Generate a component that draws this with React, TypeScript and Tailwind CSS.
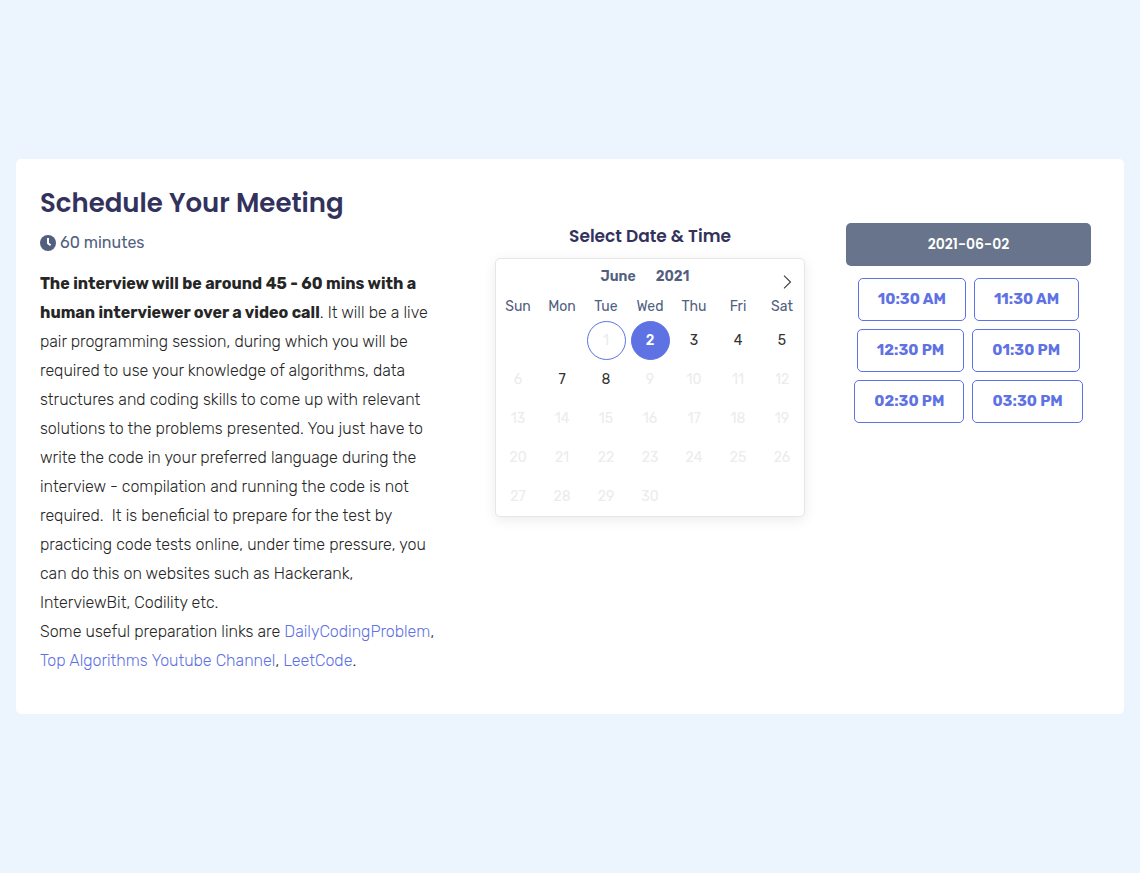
import { useState } from "react";

const weekdays = ["Sun", "Mon", "Tue", "Wed", "Thu", "Fri", "Sat"];
const weeks: number[][] = [
  [0, 0, 1, 2, 3, 4, 5],
  [6, 7, 8, 9, 10, 11, 12],
  [13, 14, 15, 16, 17, 18, 19],
  [20, 21, 22, 23, 24, 25, 26],
  [27, 28, 29, 30, 0, 0, 0],
];
const available = [2, 3, 4, 5, 7, 8];
const today = 1;
const slots = [
  ["10:30 AM", "11:30 AM"],
  ["12:30 PM", "01:30 PM"],
  ["02:30 PM", "03:30 PM"],
];

function dayStyle(day: number, selected: number) {
  if (day === selected) return "border-[#5e72e4] bg-[#5e72e4] font-medium text-white";
  if (day === today) return "border-[#5e72e4] text-[#ececec]";
  if (available.includes(day)) return "border-transparent text-[#333333]";
  return "border-transparent text-[#ececec]";
}

function Calendar({ selected, onSelect }: { selected: number; onSelect: (day: number) => void }) {
  return (
    <div className="w-[310px] rounded-[5px] border border-[#e6e6e6] bg-white shadow-[0_3px_13px_rgba(0,0,0,0.08)]">
      <div className="grid h-[33px] grid-cols-[44px_1fr_44px]">
        <span />
        <h3 className="flex items-center justify-center gap-5 pt-[2px] pr-[10px] text-[14px] leading-5 font-semibold text-[#525f7f]">
          <span>June</span>
          <span>2021</span>
        </h3>
        <button type="button" aria-label="Next month" className="flex items-end justify-center pb-[3px] pl-[9px]">
          <svg width="14" height="14" viewBox="0 0 14 14" fill="none" stroke="#3c3c3c" strokeWidth="1.1">
            <path d="M4 .7 10.5 7 4 13.3" />
          </svg>
        </button>
      </div>
      <table className="w-full table-fixed border-collapse text-center text-[14px]">
        <thead>
          <tr className="h-[29px]">
            {weekdays.map((name) => (
              <th key={name} scope="col" className="p-0 font-normal text-[#525f7f]">{name}</th>
            ))}
          </tr>
        </thead>
        <tbody>
          {weeks.map((week, row) => (
            <tr key={row}>
              {week.map((day, col) => (
                <td key={col} className="h-[39px] p-0">
                  {day > 0 && (
                    <button
                      type="button"
                      disabled={!available.includes(day)}
                      onClick={() => onSelect(day)}
                      className={`mx-auto flex size-[39px] items-center justify-center rounded-full border ${dayStyle(day, selected)}`}
                    >
                      {day}
                    </button>
                  )}
                </td>
              ))}
            </tr>
          ))}
        </tbody>
      </table>
    </div>
  );
}

export default function App() {
  const [selected, setSelected] = useState(2);

  return (
    <main className="flex min-h-screen items-center bg-[#ecf4fe] px-4 font-['Rubik','Roboto',sans-serif]">
      <div className="grid w-full grid-cols-[462fr_344fr_302fr] rounded-[5px] bg-white pt-6 pb-[39px]">
        <section className="pr-8 pl-6">
          <h1 className="font-['Poppins','Inter',sans-serif] text-[26px] leading-10 font-semibold text-[#32325d]">
            Schedule Your Meeting
          </h1>
          <p className="mt-2 flex items-center gap-1 text-[16px] leading-6 text-[#525f7f]">
            <svg width="16" height="16" viewBox="0 0 16 16" aria-hidden="true">
              <circle cx="8" cy="8" r="8" fill="#525f7f" />
              <path d="M8 3V8.3L10.6 10.2" fill="none" stroke="#fff" strokeWidth="2" />
            </svg>
            60 minutes
          </p>
          <p className="mt-[14px] text-[16px] leading-[29px] font-light whitespace-nowrap text-[#262626]">
            <strong className="font-bold">
              The interview will be around 45 - 60 mins with a<br />
              human interviewer over a video call
            </strong>
            . It will be a live<br />
            pair programming session, during which you will be<br />
            required to use your knowledge of algorithms, data<br />
            structures and coding skills to come up with relevant<br />
            solutions to the problems presented. You just have to<br />
            write the code in your preferred language during the<br />
            interview - compilation and running the code is not<br />
            required.&nbsp; It is beneficial to prepare for the test by<br />
            practicing code tests online, under time pressure, you<br />
            can do this on websites such as Hackerank,<br />
            InterviewBit, Codility etc.<br />
            Some useful preparation links are <a href="#daily" className="text-[#5e72e4]">DailyCodingProblem</a>,<br />
            <a href="#algorithms" className="text-[#5e72e4]">Top Algorithms Youtube Channel</a>,{" "}
            <a href="#leetcode" className="text-[#5e72e4]">LeetCode</a>.
          </p>
        </section>

        <section className="flex flex-col items-center pt-10">
          <h2 className="mb-[9px] font-['Poppins','Inter',sans-serif] text-[17px] leading-[26px] font-semibold text-[#32325d]">
            Select Date &amp; Time
          </h2>
          <Calendar selected={selected} onSelect={setSelected} />
        </section>

        <section className="pt-10 pr-[33px] pl-6">
          <div className="flex h-[43px] items-center justify-center rounded-[5px] bg-[#67748b] font-['Poppins','Inter',sans-serif] text-[14px] font-semibold text-white">
            {`2021-06-${String(selected).padStart(2, "0")}`}
          </div>
          <div className="mt-3 flex flex-col gap-2">
            {slots.map((row) => (
              <div key={row[0]} className="flex justify-center gap-2">
                {row.map((slot) => (
                  <button
                    key={slot}
                    type="button"
                    className="h-[43px] rounded-[5px] border border-[#5e72e4] px-[19px] text-[15px] font-bold whitespace-nowrap text-[#5e72e4]"
                  >
                    {slot}
                  </button>
                ))}
              </div>
            ))}
          </div>
        </section>
      </div>
    </main>
  );
}
